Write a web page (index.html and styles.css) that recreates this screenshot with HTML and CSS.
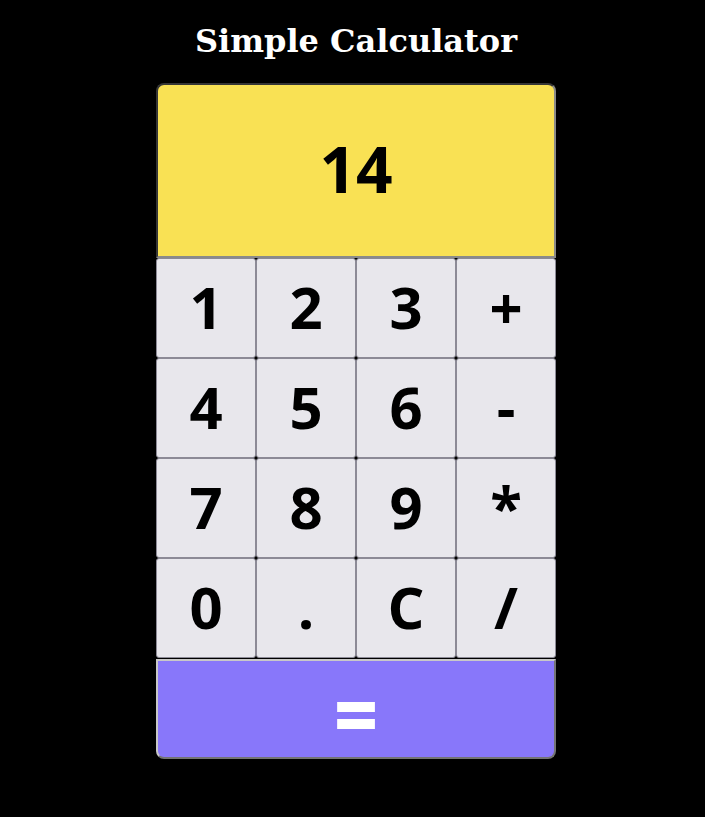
FILE: index.html
```html
<!DOCTYPE html>
<html lang="en">
<head>
<meta charset="utf-8">
<title>Simple Calculator</title>
<link rel="stylesheet" href="styles.css">
</head>
<body>
<h1 class="title">Simple Calculator</h1>
<div class="calc">
  <div class="display">14</div>
  <div class="keys">
    <button class="key">1</button>
    <button class="key">2</button>
    <button class="key">3</button>
    <button class="key">+</button>
    <button class="key">4</button>
    <button class="key">5</button>
    <button class="key">6</button>
    <button class="key">-</button>
    <button class="key">7</button>
    <button class="key">8</button>
    <button class="key">9</button>
    <button class="key">*</button>
    <button class="key">0</button>
    <button class="key">.</button>
    <button class="key">C</button>
    <button class="key">/</button>
  </div>
  <button class="equals">=</button>
</div>
</body>
</html>
```
FILE: styles.css
```css
html, body {
  background: #000;
}
body {
  margin: 8px 0 8px 7px;
}
.title {
  font-family: "DejaVu Serif", serif;
  font-size: 32px;
  font-weight: bold;
  color: #fff;
  text-align: center;
  margin: 14px 0 23px;
}
.calc {
  width: 400px;
  margin: 0 auto;
  display: flex;
  flex-direction: column;
}
.display {
  box-sizing: border-box;
  height: 175px;
  padding-bottom: 4px;
  background: #f9e154;
  border: 2px inset #8a8a8a;
  border-radius: 8px 8px 0 0;
  display: flex;
  align-items: center;
  justify-content: center;
  font-family: "Open Sans", sans-serif;
  font-weight: bold;
  font-stretch: 93%;
  font-size: 64px;
  color: #000;
}
.keys {
  display: grid;
  grid-template-columns: repeat(4, 100px);
  grid-auto-rows: 100px;
}
.key {
  box-sizing: border-box;
  margin: 0;
  background: #e8e7ec;
  border: 1px solid #8c8a96;
  border-radius: 3px;
  font-family: "Open Sans", sans-serif;
  font-weight: bold;
  font-stretch: 94%;
  font-size: 58px;
  color: #000;
  padding: 0 0 3px;
  line-height: 1;
}
.equals {
  box-sizing: border-box;
  height: 100px;
  margin: 1px 0 0;
  background: #8877fa;
  border: 2px outset #c8c8c8;
  border-radius: 0 0 8px 8px;
  font-family: "Open Sans", sans-serif;
  font-weight: 800;
  font-size: 76px;
  color: #fff;
  padding: 8px 0 0;
  line-height: 1;
}
```
